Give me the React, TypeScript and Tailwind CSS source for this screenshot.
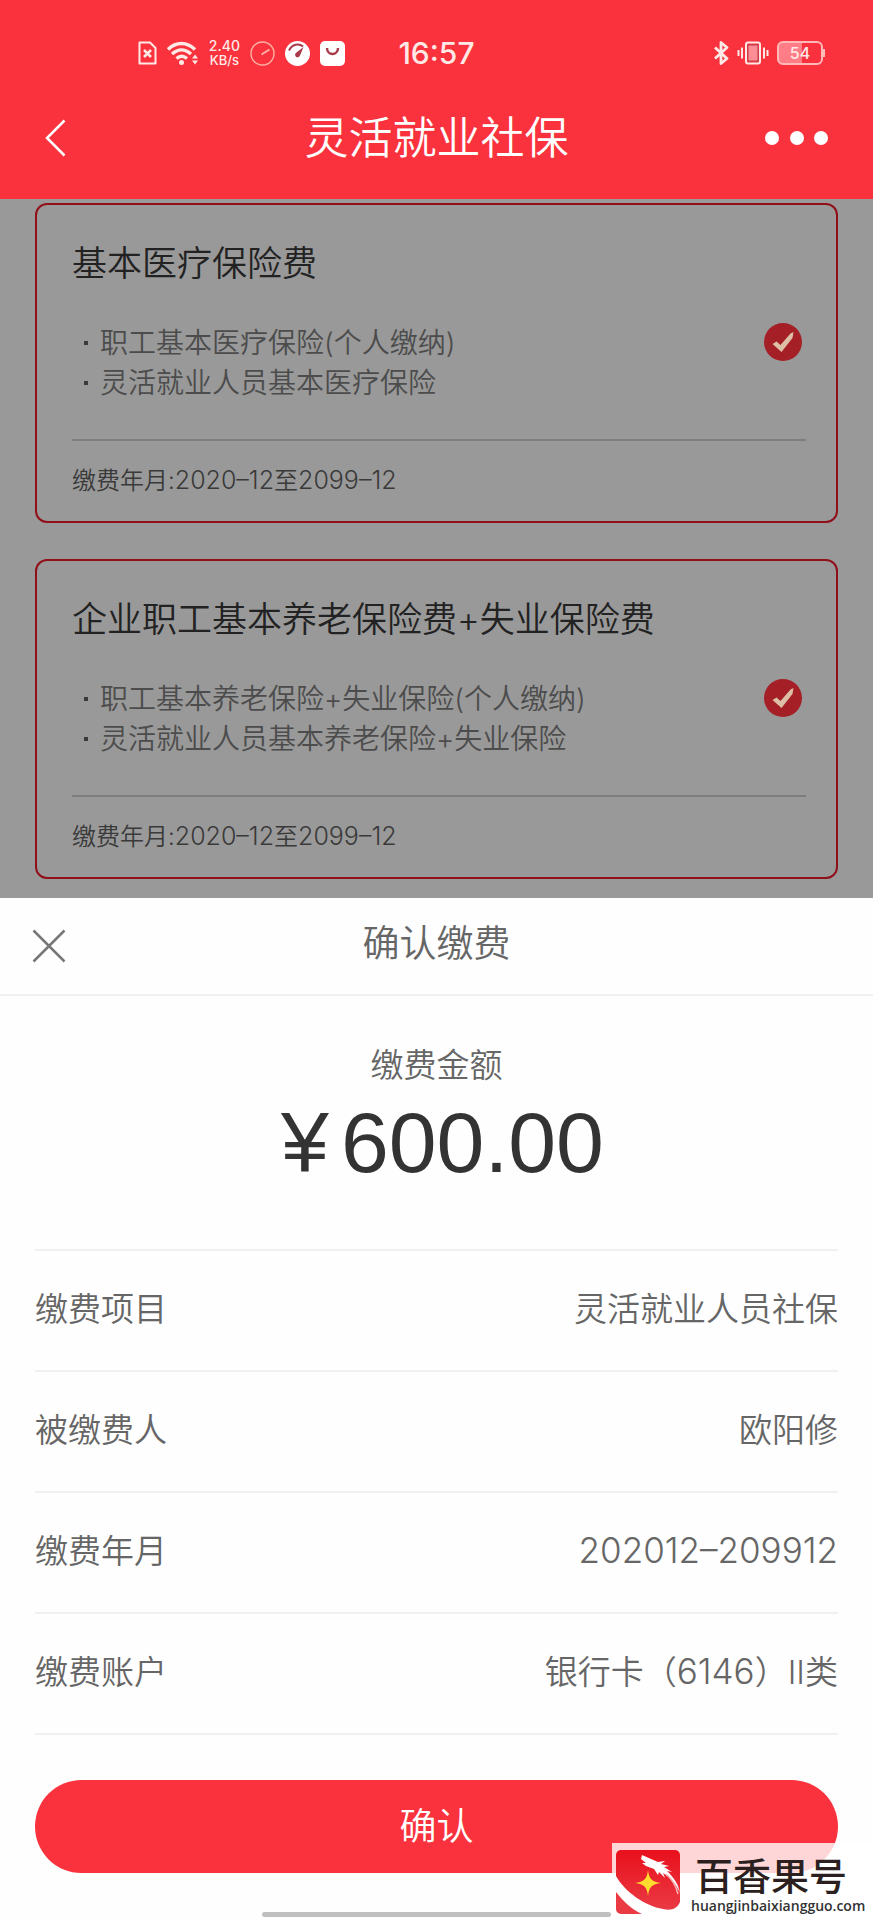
import React from "react";

type Plan = {
  id: string;
  title: string;
  items: string[];
  from: string;
  to: string;
};

const plans: Plan[] = [
  {
    id: "medical",
    title: "基本医疗保险费",
    items: ["职工基本医疗保险(个人缴纳)", "灵活就业人员基本医疗保险"],
    from: "2020–12",
    to: "2099–12",
  },
  {
    id: "pension",
    title: "企业职工基本养老保险费+失业保险费",
    items: [
      "职工基本养老保险+失业保险(个人缴纳)",
      "灵活就业人员基本养老保险+失业保险",
    ],
    from: "2020–12",
    to: "2099–12",
  },
];

const details = [
  { label: "缴费项目", value: "灵活就业人员社保" },
  { label: "被缴费人", value: "欧阳修" },
  { label: "缴费年月", value: <span className="text-[35px] leading-none">202012–209912</span> },
  {
    label: "缴费账户",
    value: (
      <>
        银行卡（<span className="text-[35px] leading-none">6146</span>）II类
      </>
    ),
  },
];

const StatusBar = () => {
  return (
    <div className="grid grid-cols-[1fr_auto_1fr] items-center h-[76px] pt-[30px] text-[#ffe9e6]">
      <div className="flex items-center justify-end gap-2.5 pr-[53px]">
        <svg width="19" height="24" viewBox="0 0 19 24" fill="none" stroke="currentColor" strokeWidth="2">
          <path d="M1.5 1.5h10.5l5.5 5.5v15.5h-16z" strokeLinejoin="round" />
          <path d="M6 9l7 7M13 9l-7 7" strokeWidth="2.6" />
        </svg>
        <svg width="31" height="24" viewBox="0 0 31 24" fill="none" stroke="currentColor" strokeWidth="3.4">
          <path d="M1 8.500c8-8 19-8 27 0" />
          <path d="M5 13c6-5.500 13-5.500 19 0" />
          <path d="M9.500 17.500c3.500-3 7-3 10.500 0" />
          <circle cx="14.500" cy="21.500" r="2.500" fill="currentColor" stroke="none" />
          <path d="M28 13.500l3 4h-6zM28 23.500l3-4h-6z" fill="currentColor" stroke="none" />
        </svg>
        <div className="flex flex-col items-center text-sm leading-[14px] font-medium w-8">
          <span>2.40</span>
          <span className="text-[13px] leading-[14px]">KB/s</span>
        </div>
        <svg width="25" height="25" viewBox="0 0 25 25" fill="none" stroke="#ffb3a6" strokeWidth="1.4">
          <circle cx="12.5" cy="12.5" r="11.5" />
          <path d="M11.5 13.5l8-5" strokeWidth="2" />
        </svg>
        <svg width="25" height="25" viewBox="0 0 25 25">
          <circle cx="12.5" cy="12.5" r="12.5" fill="#fff" />
          <path d="M4 9.5c3-6.500 10-7.500 14-4" fill="none" stroke="#a83a4a" strokeWidth="2" />
          <path d="M18.5 6l-3.500 8.500a2.500 2.500 0 1 1-3.500-3z" fill="#a83a4a" />
        </svg>
        <svg width="25" height="25" viewBox="0 0 25 25">
          <rect width="25" height="25" rx="5" fill="#fff" />
          <path d="M7 7c0 8 11 8 11 0" fill="none" stroke="#a83a4a" strokeWidth="2.4" />
        </svg>
      </div>
      <p className="text-[30px] leading-8 font-medium">16:57</p>
      <div className="flex items-center justify-end gap-2 pr-12">
        <svg width="15" height="24" viewBox="0 0 15 24" fill="none" stroke="currentColor" strokeWidth="2.8">
          <path d="M1 6.500l12 11-6 5V1.500l6 5-12 11" strokeLinejoin="round" />
        </svg>
        <svg width="32" height="24" viewBox="0 0 32 24" fill="none" stroke="currentColor" strokeWidth="2">
          <path d="M1.500 9v6M5 6.500v11M27 6.500v11M30.500 9v6" />
          <rect x="9" y="1.500" width="14" height="21" rx="2" />
          <rect x="11" y="4" width="10" height="16" fill="#ff8d95" stroke="#b5404c" strokeWidth="1" />
        </svg>
        <div className="flex items-center">
          <div className="flex items-center justify-center w-[46px] h-6 rounded-md border-2 border-[#ffb9b9] bg-linear-to-r from-[#ff7d86] from-54% to-[#f9313e] to-54% text-base leading-none font-medium">
            54
          </div>
          <span className="w-0.5 h-2 bg-[#ffb9b9]"></span>
        </div>
      </div>
    </div>
  );
};

const NavBar = () => {
  return (
    <div className="flex items-center justify-between h-[123px] px-[45px] text-white">
      <button aria-label="返回" className="w-[63px]">
        <svg width="21" height="38" viewBox="0 0 21 38" fill="none" stroke="currentColor" strokeWidth="2.5">
          <path d="M19.5 1.5L2 19l17.500 17.500" />
        </svg>
      </button>
      <h1 className="text-[44px] leading-[60px]">灵活就业社保</h1>
      <button aria-label="更多" className="flex items-center justify-between w-[63px]">
        <span className="size-[14px] rounded-full bg-white"></span>
        <span className="size-[14px] rounded-full bg-white"></span>
        <span className="size-[14px] rounded-full bg-white"></span>
      </button>
    </div>
  );
};

const PlanCard = ({ plan }: { plan: Plan }) => {
  return (
    <section className="rounded-xl border-2 border-[#901019] pt-[34px] pb-6 pl-[35px] pr-[30px]">
      <h2 className="text-[35px] leading-[48px] text-[#222]">{plan.title}</h2>
      <div className="flex items-start justify-between mt-9">
        <ul className="pl-3 text-[28px] leading-10 text-[#4c4c4c]">
          {plan.items.map((item) => (
            <li key={item} className="flex items-center gap-3">
              <span className="size-1 bg-[#3a3a3a]"></span>
              {item}
            </li>
          ))}
        </ul>
        <label className="relative mr-1 shrink-0">
          <input
            type="checkbox"
            defaultChecked
            aria-label={plan.title}
            className="block appearance-none size-[38px] rounded-full bg-[#a51f26]"
          />
          <svg
            className="absolute inset-0 pointer-events-none"
            width="38"
            height="38"
            viewBox="0 0 38 38"
          >
            <path d="M8.5 21l4-2.500 4 3.500 10-11.500 3-1.500-1 6-11 14z" fill="#dcbfa6" />
          </svg>
        </label>
      </div>
      <p className="mt-9 border-t-2 border-[#7e7e7e] pt-6 text-2xl leading-8 text-[#3a3a3a]">
        缴费年月:<span className="text-[25px] leading-none">{plan.from}</span>至
        <span className="text-[25px] leading-none">{plan.to}</span>
      </p>
    </section>
  );
};

const Watermark = () => {
  return (
    <div className="absolute right-0 bottom-0 flex items-center w-[261px] h-[77px] pl-1 gap-[11px] bg-white/80">
      <svg width="64" height="64" viewBox="0 0 64 64" className="shrink-0">
        <defs>
          <linearGradient id="logo" x1="0" y1="0" x2="0" y2="1">
            <stop offset="0" stopColor="#e8101c" />
            <stop offset="1" stopColor="#ea3a44" />
          </linearGradient>
        </defs>
        {/* upper body, cut off by the white sweep */}
        <path
          d="M5 0h54a5 5 0 0 1 5 5v47c-3 7-9 9-17 7C29 56 9 42 0 26V5a5 5 0 0 1 5-5z"
          fill="url(#logo)"
        />
        <path d="M0 42c7 9 15 17 26 22H5a5 5 0 0 1-5-5z" fill="#ea3a44" />
        {/* dragon head and mane */}
        <path
          d="M26 5l9 4 7 3 7-1-4 3 8 2-5 1 8 5-5-1c7 7 11 12 13 22-4-9-9-15-17-20l2 5-6-6-1 3-4-6-8-3-4-3 4 0-5-4z"
          fill="#fff"
        />
        <path d="M50 24c6 5 10 12 12 20" fill="none" stroke="#f7b4b7" strokeWidth="1.5" />
        <path d="M32 20c1 9 4 12 13 13-9 1-12 4-13 13-1-9-4-12-13-13 9-1 12-4 13-13z" fill="#ffdc2e" />
      </svg>
      <div className="flex flex-col pt-1">
        <span className="pl-1 text-[38px] leading-[44px] font-medium text-[#2b1f20]">百香果号</span>
        <span className="font-['Open_Sans','Noto_Sans',sans-serif] text-sm leading-4 font-semibold text-[#333]">
          huangjinbaixiangguo.com
        </span>
      </div>
    </div>
  );
};

const App = () => {
  return (
    <div className="relative flex flex-col min-h-screen bg-[#999] font-['Inter','Noto_Sans_CJK_SC',sans-serif] font-[350]">
      <header className="bg-[#fa323d]">
        <StatusBar />
        <NavBar />
      </header>

      <main className="flex flex-col gap-9 px-[35px] pt-1 pb-[19px]">
        {plans.map((plan) => (
          <PlanCard key={plan.id} plan={plan} />
        ))}
      </main>

      <div role="dialog" aria-labelledby="confirm-title" className="grow flex flex-col bg-[#fefefe] text-[#666]">
        <div className="grid grid-cols-[1fr_auto_1fr] items-center h-[98px] px-8 pb-1 border-b-2 border-[#f0f0f0]">
          <button aria-label="关闭" className="w-9 pt-1">
            <svg width="34" height="34" viewBox="0 0 34 34" fill="none" stroke="#777" strokeWidth="2.5">
              <path d="M1.500 1.500l31 31M32.500 1.500l-31 31" />
            </svg>
          </button>
          <h2 id="confirm-title" className="text-[37px] leading-[48px]">
            确认缴费
          </h2>
        </div>

        <div className="flex flex-col items-center pt-[45px] pb-16">
          <p className="text-[33px] leading-[48px]">缴费金额</p>
          <p className="flex gap-3 mt-2.5 pl-3 font-['Liberation_Sans',sans-serif] text-[86px] leading-[86px] text-[#333]">
            <span>¥</span>
            <span>600.00</span>
          </p>
        </div>

        <dl className="px-[35px] text-[33px] leading-[48px]">
          {details.map((row) => (
            <div
              key={row.label}
              className="flex items-center justify-between h-[121px] pb-1 border-t-2 border-[#f0f0f0]"
            >
              <dt>{row.label}</dt>
              <dd>{row.value}</dd>
            </div>
          ))}
        </dl>

        <div className="px-[35px]">
          <div className="border-t-2 border-[#f0f0f0] pt-[45px]">
            <button className="w-full h-[93px] rounded-full bg-[#fa323d] text-[37px] leading-[48px] text-white">
              确认
            </button>
          </div>
        </div>

        <div className="mt-auto mx-auto mb-[3px] w-2/5 h-[5px] rounded-full bg-[#c0c0c0]"></div>
      </div>

      <Watermark />
    </div>
  );
};

export default App;
